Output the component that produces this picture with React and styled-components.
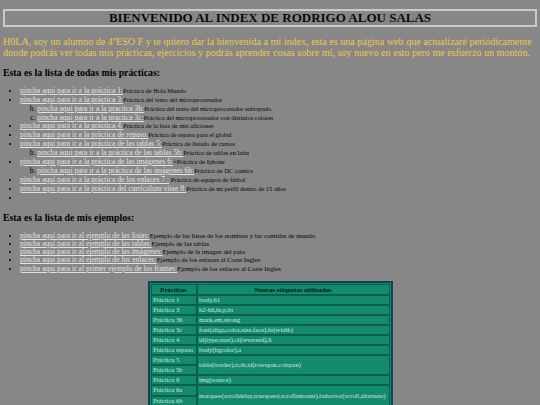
import React from 'react';
import styled, { createGlobalStyle } from 'styled-components';

const Global = createGlobalStyle`
  html, body { margin: 0; padding: 0; background: #878787; }
  body { font-family: "Liberation Serif", "Times New Roman", serif; color: #000; }
`;

const Page = styled.div`
  padding: 9px 3px 0;
`;

const Title = styled.h1`
  margin: 0;
  border: 2px solid #c9c9c9;
  font-size: 13px;
  line-height: 14px;
  font-weight: bold;
  text-align: center;
  color: #0a0a0a;
`;

const Intro = styled.p`
  margin: 8.7px 0 0;
  color: #efc84a;
  font-size: 10.1px;
  line-height: 11.4px;
`;

const SectionTitle = styled.h2`
  margin: ${p => p.$top}px 0 0;
  font-size: 9.8px;
  line-height: 11.3px;
  font-weight: bold;
`;

const List = styled.ul`
  margin: ${p => p.$top}px 0 0;
  padding-left: 17px;
  list-style: disc;
`;

const SubList = styled.ol`
  margin: 0;
  padding-left: 17.3px;
  list-style: lower-alpha;
`;

const Item = styled.li`
  font-size: 7.6px;
  line-height: ${p => p.$lh}px;
`;

const Link = styled.a`
  color: #e2e2e2;
  text-decoration: underline;
`;

const Desc = styled.span`
  font-size: ${p => p.$fs}px;
  line-height: 1;
  color: #050505;
`;

const Table = styled.table`
  margin: 7.6px auto 0;
  width: 245px;
  border: 2px solid #0f4654;
  padding: 1px;
  background: #138a6c;
  border-collapse: separate;
  border-spacing: 0;
  font-size: 6.6px;
  line-height: 8.1px;
`;

const HeadCell = styled.th`
  border: 1px solid #0b5f4f;
  color: #071a14;
  font-weight: bold;
  font-size: 6.7px;
  line-height: 9px;
  padding: 0 1.5px;
  text-align: center;
  width: ${p => (p.$first ? '41px' : 'auto')};
`;

const Cell = styled.td`
  border: 1px solid #0b5f4f;
  color: #d2e6dc;
  padding: 0 1.5px;
  white-space: nowrap;
  text-align: left;
  vertical-align: middle;
`;

const practicas = [
  { link: 'pincha aqui para ir a la práctica 1:', desc: 'Práctica de Hola Mundo' },
  {
    link: 'pincha aqui para ir a la práctica 3:',
    desc: 'Práctica del texto del microprocesador',
    sub: [
      { link: 'pincha aqui para ir a la practica 3b:', desc: 'Práctica del texto del microprocesador subrayado' },
      { link: 'pincha aqui para ir a la practica 3c:', desc: 'Práctica del microprocesador con distintos colores' },
    ],
  },
  { link: 'pincha aqui para ir a la práctica 4:', desc: 'Práctica de la lista de mis aficiones' },
  { link: 'pincha aqui para ir a la práctica de repaso:', desc: 'Práctica de repaso para el global' },
  {
    link: 'pincha aqui para ir a la práctica de las tablas 5:',
    desc: 'Práctica de listado de cursos',
    sub: [{ link: 'pincha aqui para ir a la práctica de las tablas 5b:', desc: 'Práctica de tablas en latín' }],
  },
  {
    link: 'pincha aqui para ir a la práctica de las imágenes 6:',
    desc: '>Práctica de Iphone',
    sub: [{ link: 'pincha aqui para ir a la práctica de las imágenes 6b:', desc: 'Práctica de DC comics' }],
  },
  { link: 'pincha aqui para ir a la práctica de los enlaces 7 :', desc: ' Práctica de equipos de fútbol' },
  { link: 'pincha aqui para ir a la práctica del currículum vitae 8:', desc: 'Práctica de mi perfil dentro de 15 años' },
  { empty: true },
];

const ejemplos = [
  { link: 'pincha aqui para ir al ejemplo de las listas:', desc: 'Ejemplo de las listas de los nombres y las comidas de mundo' },
  { link: 'pincha aqui para ir al ejemplo de las tablas:', desc: 'Ejemplo de las tablas' },
  { link: 'pincha aqui para ir al ejemplo de las imágenes:', desc: 'Ejemplo de la imagen del pato' },
  { link: 'pincha aqui para ir al ejemplo de los enlaces:', desc: 'Ejemplo de los enlaces al Corte Ingles' },
  { link: 'pincha aqui para ir al primer ejemplo de los frames:', desc: 'Ejemplo de los enlaces al Corte Ingles' },
];

const rows = [
  [['Práctica 1'], 'body,h1'],
  [['Práctica 3'], 'h2-h6,hr,p,br'],
  [['Práctica 3b'], 'mark,em,strong'],
  [['Práctica 3c'], 'font(aliga,color,size,face),hr(width)'],
  [['Práctica 4'], 'ul(type,start),ol(reversed),li'],
  [['Práctica repaso'], 'body(bgcolor),a'],
  [['Práctica 5', 'Práctica 5b'], 'table(border),tr,th,td(rowspan,colspan)'],
  [['Práctica 6'], 'img(source)'],
  [['Práctica 6a', 'Práctica 6b'], 'marquee(scrolldelay,truespeed,scrollamount),bahavior(scroll,alternate)'],
];

function Entry({ item, lh, fs }) {
  if (item.empty) return <Item $lh={lh} />;
  return (
    <Item $lh={lh}>
      <Link href="#">{item.link}</Link>
      <Desc $fs={fs}>{item.desc}</Desc>
      {item.sub && (
        <SubList start={2}>
          {item.sub.map((s) => (
            <Item key={s.link} $lh={lh}>
              <Link href="#">{s.link}</Link>
              <Desc $fs={fs}>{s.desc}</Desc>
            </Item>
          ))}
        </SubList>
      )}
    </Item>
  );
}

export default function App() {
  return (
    <>
      <Global />
      <Page>
        <Title>BIENVENIDO AL INDEX DE RODRIGO ALOU SALAS</Title>
        <Intro>
          H0LA, soy un alumno de 4ºESO F y te quiero dar la bienvenida a mi index, esta es una página web que
          actualizaré periódicamente donde podrás ver todas mis prácticas, ejercicios y podrás aprender cosas sobre
          mí, soy nuevo en esto pero me esfuerzo un montón.
        </Intro>
        <SectionTitle $top={8.9}>Esta es la lista de todas mis prácticas:</SectionTitle>
        <List $top={8.1}>
          {practicas.map((p, i) => (
            <Entry key={i} item={p} lh={8.9} fs={6.45} />
          ))}
        </List>
        <SectionTitle $top={9.3}>Esta es la lista de mis ejemplos:</SectionTitle>
        <List $top={8.4}>
          {ejemplos.map((p, i) => (
            <Entry key={i} item={p} lh={8.3} fs={6.77} />
          ))}
        </List>
        <Table>
          <thead>
            <tr>
              <HeadCell $first>Prácticas</HeadCell>
              <HeadCell>Nuevas etiquetas utilizadas</HeadCell>
            </tr>
          </thead>
          <tbody>
            {rows.map(([names, tags]) =>
              names.map((n, j) => (
                <tr key={n}>
                  <Cell>{n}</Cell>
                  {j === 0 && <Cell rowSpan={names.length}>{tags}</Cell>}
                </tr>
              ))
            )}
          </tbody>
        </Table>
      </Page>
    </>
  );
}
